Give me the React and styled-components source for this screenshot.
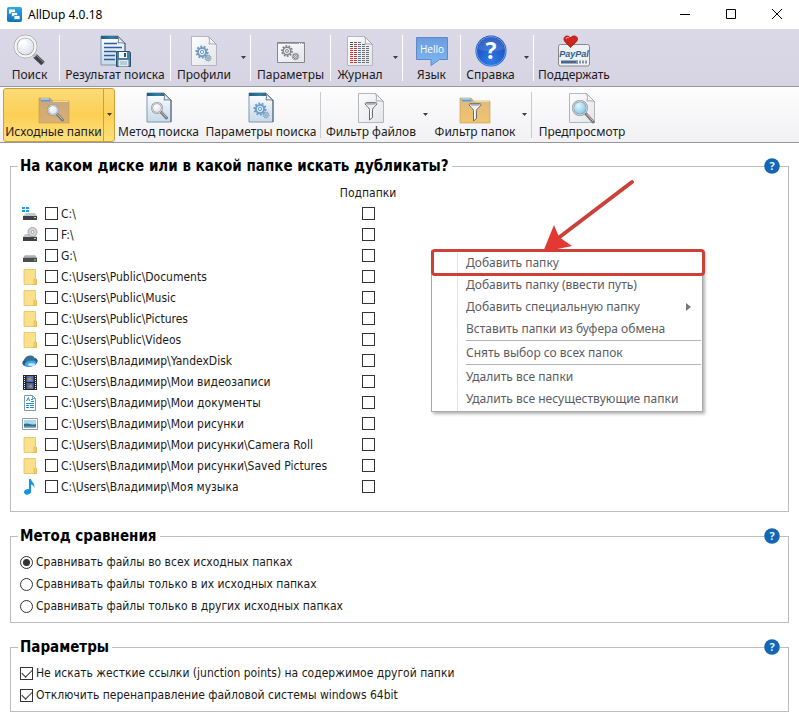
import React from 'react';
import styled, { createGlobalStyle } from 'styled-components';

const GlobalStyle = createGlobalStyle`
    * {
        box-sizing: border-box;
    }

    body {
        margin: 0;
        background-color: #fff;
        color: #1a1a1a;
        font-family: 'DejaVu Sans Condensed', 'DejaVu Sans', sans-serif;
        font-size: 12px;
    }

    button,
    input {
        font: inherit;
        color: inherit;
        margin: 0;
    }
`;

const uiFont = "'Noto Sans', 'Open Sans', sans-serif";

// Title bar
const TitleBar = styled.header`
    display: flex;
    align-items: center;
    height: 29px;
    padding: 0 16px 0 7px;
    gap: 6px;
    font-family: ${uiFont};
    font-size: 12px;
    color: #000;
`;

const AppTitle = styled.h1`
    flex: 1;
    margin: 0;
    font-size: 12px;
    font-weight: 400;
    line-height: 16px;
`;

const WindowButtons = styled.div`
    display: flex;
    gap: 34px;
`;

const WindowButton = styled.button`
    display: flex;
    width: 12px;
    height: 12px;
    padding: 0;
    border: 0;
    background: none;
`;

// Toolbars
const Toolbar = styled.nav`
    display: flex;
    align-items: center;
    height: ${(p) => (p.$main ? 58 : 56)}px;
    padding-left: ${(p) => (p.$main ? 0 : 3)}px;
    border-bottom: 1px solid #98979d;
    background: ${(p) =>
        p.$main
            ? 'linear-gradient(#dbd8e7, #d6d3e2)'
            : 'linear-gradient(#fdfdfe, #f1f1f3)'};
    font-family: ${uiFont};
`;

const Separator = styled.span`
    flex: none;
    width: 1px;
    height: 46px;
    background-color: ${(p) => (p.$light ? '#fff' : '#c9c9cf')};
`;

const ToolSplit = styled.div`
    flex: none;
    display: flex;
    height: 54px;
    border: 1px solid ${(p) => (p.$active ? '#c9a03c' : 'transparent')};
    border-radius: 3px;
    background: ${(p) =>
        p.$active ? 'linear-gradient(#fddb78, #fccf55 50%, #fee07c)' : 'none'};
`;

const ToolButton = styled.button`
    display: flex;
    flex-direction: column;
    align-items: center;
    width: ${(p) => p.$width}px;
    padding: 3px 0 0;
    border: 0;
    background: none;
    font-size: 12px;
    line-height: 16px;
    white-space: nowrap;
    color: #1d1b22;

    svg {
        flex: none;
        display: block;
        overflow: visible;
    }
`;

const DropButton = styled.button`
    display: flex;
    align-items: center;
    justify-content: center;
    width: ${(p) => p.$width}px;
    padding: 0;
    border: 0;
    border-left: 1px solid ${(p) => (p.$active ? '#c9a03c' : 'transparent')};
    background: none;
`;

// Groups
const Main = styled.main`
    display: flex;
    flex-direction: column;
    gap: 14px;
    padding: 13px 10px;
`;

const Group = styled.fieldset`
    position: relative;
    min-width: 0;
    margin: 0;
    padding: ${(p) => (p.$tall ? '6px 7px 14px' : '5px 7px')};
    border: 1px solid #bdbdbd;
`;

const GroupTitle = styled.legend`
    padding: 0 3px 0 2px;
    font-size: 15px;
    font-weight: 700;
    line-height: 20px;
    color: #000;
`;

const HelpButton = styled.button`
    position: absolute;
    top: -18px;
    right: 8px;
    display: flex;
    width: 16px;
    height: 16px;
    padding: 0;
    border: 0;
    border-radius: 50%;
    background: #fff;
`;

const FolderTable = styled.table`
    border-collapse: collapse;

    th {
        padding: 0;
        font-weight: 400;
        text-align: center;
    }

    td {
        height: 21px;
        padding: 0;
    }

    tr {
        height: 21px;
    }
`;

const IconCell = styled.td`
    width: 27px;
    padding-left: 4px !important;

    svg {
        display: block;
    }
`;

const PathCell = styled.td`
    width: 294px;
`;

const SubCell = styled.td`
    width: 58px;

    input {
        margin: 0 auto;
    }
`;

const Option = styled.label`
    display: flex;
    align-items: center;
    gap: 3px;
    height: ${(p) => (p.$compact ? 21 : 22)}px;
    padding-left: ${(p) => (p.$compact ? 0 : 2)}px;
    white-space: nowrap;
`;

const CheckBox = styled.input`
    appearance: none;
    flex: none;
    display: flex;
    align-items: center;
    justify-content: center;
    width: 13px;
    height: 13px;
    border: 1px solid #333;
    background-color: #fff;

    &:checked::before {
        content: '';
        width: 9px;
        height: 5px;
        margin-bottom: 3px;
        border: solid #333;
        border-width: 0 0 1px 1px;
        transform: rotate(-45deg);
    }
`;

const RadioButton = styled.input`
    appearance: none;
    flex: none;
    display: flex;
    align-items: center;
    justify-content: center;
    width: 13px;
    height: 13px;
    border: 1px solid #333;
    border-radius: 50%;
    background-color: #fff;

    &:checked::before {
        content: '';
        width: 7px;
        height: 7px;
        border-radius: 50%;
        background-color: #333;
    }
`;

// Context menu, floats over the folder group
const MenuLayer = styled.div`
    position: absolute;
    top: 74px;
    left: 420px;
    width: 274px;
    font-family: ${uiFont};
`;

const Menu = styled.div`
    display: flex;
    flex-direction: column;
    width: 272px;
    padding: 1px;
    border: 1px solid #a9a9a9;
    background: linear-gradient(
        to right,
        #fff 25px,
        #e2e2e2 25px,
        #e2e2e2 26px,
        #fff 26px
    );
    box-shadow: 2px 2px 3px rgba(0, 0, 0, 0.3);
`;

const MenuItem = styled.button`
    display: flex;
    align-items: center;
    justify-content: space-between;
    height: 22px;
    padding: 0 10px 0 33px;
    border: 0;
    background: none;
    font-size: 12px;
    line-height: 16px;
    white-space: nowrap;
    color: #5c5c62;
`;

const MenuLine = styled.hr`
    width: auto;
    height: 1px;
    margin: 0 0 1px 33px;
    border: 0;
    background-color: #b5b5b5;
`;

const Highlight = styled.div`
    position: absolute;
    top: -1px;
    left: 0;
    width: 274px;
    height: 27px;
    border: 3px solid #cb4139;
    border-radius: 4px;
    pointer-events: none;
`;

const Pointer = styled.svg`
    position: absolute;
    top: -72px;
    left: 108px;
    pointer-events: none;
`;

// Shared drawing parts
const Gradients = () => (
    <svg width="0" height="0" style={{ position: 'absolute' }} aria-hidden="true">
        <defs>
            <linearGradient id="page" x1="0" y1="0" x2="1" y2="1">
                <stop offset="0" stopColor="#fdfdfe" />
                <stop offset="1" stopColor="#e3e5ea" />
            </linearGradient>
            <linearGradient id="bluePage" x1="0" y1="0" x2="0" y2="1">
                <stop offset="0" stopColor="#fdfefe" />
                <stop offset="1" stopColor="#c7d9e8" />
            </linearGradient>
            <linearGradient id="teal" x1="0" y1="0" x2="1" y2="0">
                <stop offset="0" stopColor="#1c5c84" />
                <stop offset="0.6" stopColor="#2f7fa6" />
                <stop offset="1" stopColor="#4b5c6a" />
            </linearGradient>
            <linearGradient id="folder" x1="0" y1="0" x2="0" y2="1">
                <stop offset="0" stopColor="#ddba80" />
                <stop offset="1" stopColor="#f2c46c" />
            </linearGradient>
            <linearGradient id="folderOn" x1="0" y1="0" x2="0" y2="1">
                <stop offset="0" stopColor="#c8a77a" />
                <stop offset="1" stopColor="#d9b070" />
            </linearGradient>
            <linearGradient id="bubble" x1="0" y1="0" x2="0" y2="1">
                <stop offset="0" stopColor="#6c9ee0" />
                <stop offset="1" stopColor="#7db7f0" />
            </linearGradient>
            <radialGradient id="ball" cx="0.5" cy="0.8" r="0.8">
                <stop offset="0" stopColor="#2f7be8" />
                <stop offset="1" stopColor="#1546b4" />
            </radialGradient>
            <radialGradient id="glass" cx="0.4" cy="0.35" r="0.7">
                <stop offset="0" stopColor="#ffffff" />
                <stop offset="1" stopColor="#d3dde6" />
            </radialGradient>
            <radialGradient id="glassBlue" cx="0.4" cy="0.35" r="0.7">
                <stop offset="0" stopColor="#e2f8ff" />
                <stop offset="1" stopColor="#6fc0e4" />
            </radialGradient>
            <linearGradient id="disk" x1="0" y1="0" x2="0" y2="1">
                <stop offset="0" stopColor="#c9cbcd" />
                <stop offset="1" stopColor="#8f9194" />
            </linearGradient>
            <linearGradient id="logo" x1="0" y1="0" x2="0" y2="1">
                <stop offset="0" stopColor="#2aa9e6" />
                <stop offset="1" stopColor="#0e70b8" />
            </linearGradient>
        </defs>
    </svg>
);

const Icon = ({ children }) => (
    <svg width="32" height="32" viewBox="0 0 32 32" aria-hidden="true">
        {children}
    </svg>
);

const Page = () => (
    <>
        <path d="M3.5 1.5h17l8 8v21h-25z" fill="url(#page)" stroke="#b3b6bc" />
        <path d="M20.5 1.5c1.5 3 1 5 .5 7.5 3-.5 5.500 0 7.5.5z" fill="#f4f5f7" stroke="#a5a8ae" />
    </>
);

const BluePage = ({ x = 0 }) => (
    <g transform={`translate(${x} 0)`}>
        <path d="M4 1h17l7 7v22H4z" fill="url(#bluePage)" stroke="#7d98b1" />
        <path d="M4 1h17l1 3H4z" fill="url(#teal)" />
        <path d="M28 8v22" stroke="#46647e" />
        <path d="M20.500 1c1.500 3 1 5 .5 7 3-.5 5.500 0 7 .5z" fill="#e8edf2" stroke="#4e6476" strokeWidth="0.800" />
    </g>
);

const Gear = ({ x, y, r, color, width = 1.5 }) => (
    <g fill="none" stroke={color}>
        <circle
            cx={x}
            cy={y}
            r={r}
            strokeWidth={r * 0.4}
            pathLength="20"
            strokeDasharray="1.1 0.9"
        />
        <circle cx={x} cy={y} r={r * 0.75} strokeWidth={width} />
        <circle cx={x} cy={y} r={r * 0.3} strokeWidth="1" />
    </g>
);

const Lens = ({ x, y, r, fill = 'url(#glass)' }) => (
    <>
        <path
            d={`M${x + r * 0.8} ${y + r * 0.8}l${r * 1.1} ${r * 1.2}`}
            stroke="#74777b"
            strokeWidth="3"
            strokeLinecap="round"
        />
        <path
            d={`M${x + r * 0.9} ${y + r * 0.8}l${r} ${r * 1.1}`}
            stroke="#c6c8cb"
            strokeWidth="1"
        />
        <circle cx={x} cy={y} r={r} fill={fill} stroke="#85898e" strokeWidth="2" />
        <circle cx={x} cy={y} r={r} fill="none" stroke="#dfe1e3" strokeWidth="1" />
    </>
);

const FolderShape = ({ fill }) => (
    <>
        <path d="M1 6h11l3 3h16v22H1z" fill={`url(#${fill})`} stroke="#bd9a5d" strokeWidth="0.6" />
        <path d="M3 6.500h8l2 3H3z" fill="#5b9fd0" />
        <path d="M3 6.500h8v1H3z" fill="#d7edf8" />
        <path d="M15 9.500h15.500" stroke="#eed6a5" />
    </>
);

const Funnel = ({ y = 0 }) => (
    <g transform={`translate(0 ${y})`}>
        <path
            d="M10 10.500c0-1.500 12-1.500 12 0 0 2-4.500 4-4.500 6v8l-3 2.500v-10.500c0-2-4.500-4-4.500-6z"
            fill="#eceeef"
            stroke="#6a6d70"
        />
        <ellipse cx="16" cy="10.700" rx="5" ry="1" fill="#a9acaf" />
        <path d="M15.500 17v8" stroke="#fff" />
    </g>
);

const SearchIcon = () => (
    <Icon>
        <path d="M21 21l8 7.500" stroke="#3e4145" strokeWidth="5" />
        <path d="M22.500 20.500l8 7.500" stroke="#8c9095" strokeWidth="1" />
        <path d="M18.500 18.500l3 3" stroke="#b9bbbe" strokeWidth="3" />
        <circle cx="11.500" cy="11.500" r="10" fill="url(#glass)" stroke="#8d9093" strokeWidth="3.500" />
        <circle cx="11.500" cy="11.500" r="10" fill="none" stroke="#f3f3f1" strokeWidth="2.500" />
        <path d="M5.500 11a6 6 0 0 1 6-5.500" fill="none" stroke="#fff" strokeWidth="2" />
    </Icon>
);

const ResultIcon = () => (
    <Icon>
        <BluePage x={-2} />
        <path d="M5 8.500h13M5 12.500h18M5 16.500h12M5 20.500h11M5 24.500h11" stroke="#2f5d9c" strokeWidth="1.500" />
        <path d="M17.500 16.500h13l1 1v14h-14z" fill="#4f7f9c" stroke="#2c526b" />
        <path d="M20 17h8v6h-8z" fill="#f1f6f9" />
        <path d="M25 18h2v4h-2z" fill="#2c526b" />
        <path d="M19.500 25h10v6.500h-10z" fill="#dfeaf0" />
        <path d="M21 27h7M21 29h7" stroke="#93afbe" />
    </Icon>
);

const ProfilesIcon = () => (
    <Icon>
        <Page />
        <Gear x={14} y={17} r={5.5} color="#6f9cc4" width={2} />
        <Gear x={20} y={23} r={3} color="#7d9dbb" width={1} />
    </Icon>
);

const SettingsIcon = () => (
    <Icon>
        <path d="M2.500 7.500h27v20h-27z" fill="url(#page)" stroke="#85878b" />
        <path d="M3 8.500h26" stroke="#a2a4a8" />
        <path d="M24 8.500h4" stroke="#fff" strokeDasharray="1 1" />
        <Gear x={12} y={16} r={5} color="#85878a" />
        <Gear x={20.5} y={21.5} r={3.2} color="#85878a" width={1} />
    </Icon>
);

const JournalIcon = () => (
    <Icon>
        <Page />
        <path d="M7.500 7v5" stroke="#4c4f54" strokeWidth="3" strokeDasharray="1 1" />
        <path d="M7.500 13v15" stroke="#d03a32" strokeWidth="3" strokeDasharray="1 1" />
        <path d="M11.500 7v21" stroke="#a2433f" strokeWidth="3" strokeDasharray="1 1" />
        <path d="M15.500 7v21" stroke="#5f7396" strokeWidth="3" strokeDasharray="1 1" />
        <path d="M19.500 9v19M23.500 11v17" stroke="#6d7075" strokeWidth="3" strokeDasharray="1 1" />
    </Icon>
);

const LanguageIcon = () => (
    <Icon>
        <path d="M.5 2.500h31v22h-8l-8.500 6v-6H.5z" fill="url(#bubble)" stroke="#6089c9" />
        <text x="16" y="17.500" textAnchor="middle" fontFamily="Open Sans, sans-serif" fontSize="10" fill="#fff">
            Hello
        </text>
    </Icon>
);

const HelpIcon = () => (
    <Icon>
        <circle cx="16" cy="16" r="15.500" fill="url(#ball)" />
        <circle cx="16" cy="16" r="14.500" fill="none" stroke="#6f9fe6" />
        <path d="M3 14a13 12 0 0 1 26 0c-6 3-20 3-26 0z" fill="#fff" opacity="0.13" />
        <text x="16" y="24" textAnchor="middle" fontFamily="Open Sans, sans-serif" fontSize="23" fontWeight="700" fill="#fff">
            ?
        </text>
    </Icon>
);

const DonateIcon = () => (
    <Icon>
        <rect x="0.500" y="9.500" width="31" height="21.500" rx="2" fill="#eff1f3" stroke="#85888d" />
        <path d="M3 27h17" stroke="#49688c" strokeWidth="3" />
        <path d="M18 27h11" stroke="#8296ad" strokeWidth="3" strokeDasharray="2 1" />
        <text x="16" y="22" textAnchor="middle" fontFamily="Liberation Sans, sans-serif" fontSize="9" fontWeight="700" fontStyle="italic" fill="#2d5f8f">
            PayPal
        </text>
        <path d="M12.500 12.500c-3-3.500-7-6-6.500-9C6.500.5 10.500 0 12.500 3c2-3 6.500-2.500 7 .5s-4 5.500-7 9z" fill="#d2231e" stroke="#8f1512" strokeWidth="0.800" />
        <path d="M8 4c0-1.500 2-2 3-1" fill="none" stroke="#f28b82" strokeWidth="1.200" />
    </Icon>
);

const SourceIcon = () => (
    <Icon>
        <FolderShape fill="folderOn" />
        <Lens x={15} y={18} r={5} />
    </Icon>
);

const MethodIcon = () => (
    <Icon>
        <BluePage />
        <Lens x={14} y={16} r={5} />
    </Icon>
);

const SearchSettingsIcon = () => (
    <Icon>
        <BluePage />
        <Gear x={15} y={17} r={5.5} color="#6b9ecb" width={2} />
        <Gear x={21} y={23} r={3} color="#86a3bd" width={1} />
    </Icon>
);

const FileFilterIcon = () => (
    <Icon>
        <Page />
        <Funnel y={1} />
    </Icon>
);

const FolderFilterIcon = () => (
    <Icon>
        <FolderShape fill="folder" />
        <Funnel y={2} />
    </Icon>
);

const PreviewIcon = () => (
    <Icon>
        <Page />
        <Lens x={14} y={16} r={7} fill="url(#glassBlue)" />
    </Icon>
);

const SmallHelp = () => (
    <svg width="16" height="16" viewBox="0 0 16 16" aria-hidden="true">
        <circle cx="8" cy="8" r="7.800" fill="#1466b4" />
        <text x="8" y="12" textAnchor="middle" fontFamily="Open Sans, sans-serif" fontSize="11" fontWeight="700" fill="#d9f6ff">
            ?
        </text>
    </svg>
);

const DownArrow = () => (
    <svg width="5" height="3" viewBox="0 0 5 3" aria-hidden="true">
        <path d="M0 0h5L2.500 3z" fill="#3b3b40" />
    </svg>
);

// 16px icons of the folder list
const listIcons = {
    system: (
        <>
            <path d="M0 1h3v2H0zM4 1h3v2H4zM0 4h3v2H0zM4 4h3v2H4z" fill="#1b9fe0" />
            <path d="M4 7h9l2 3H1z" fill="#c5c8ca" />
            <path d="M1 10h14v4H1z" fill="#3e4246" />
            <path d="M12 11.500h2" stroke="#8ef09c" />
        </>
    ),
    cd: (
        <>
            <path d="M3 7h10l2 3H1z" fill="#c5c8ca" />
            <circle cx="10.500" cy="5" r="4.500" fill="#d5d7d9" stroke="#8d9093" strokeWidth="0.800" />
            <circle cx="10.500" cy="5" r="1.500" fill="#fff" stroke="#8d9093" strokeWidth="0.800" />
            <path d="M1 10h14v4H1z" fill="#3e4246" />
            <path d="M12 11.500h2" stroke="#8ef09c" />
        </>
    ),
    drive: (
        <>
            <path d="M3 7h10l2 3H1z" fill="url(#disk)" />
            <path d="M1 10h14v4H1z" fill="#4a4e52" />
            <path d="M12 12h2" stroke="#8ef09c" />
        </>
    ),
    folder: (
        <>
            <path d="M2 .5h11.500v9l1 1v5H2z" fill="#fbe08c" stroke="#e2bf5f" strokeWidth="0.800" />
            <path d="M12 15.500v-5l1.500-1 1 1v5z" fill="#f4cf66" stroke="#d9b24f" strokeWidth="0.600" />
        </>
    ),
    yandex: (
        <>
            <ellipse cx="8" cy="9" rx="7.800" ry="4.500" transform="rotate(-12 8 9)" fill="#2a5878" />
            <path d="M2 7c1-4 7-6 10-3l2 4-8 3z" fill="#376f92" />
            <ellipse cx="8.500" cy="10.800" rx="6" ry="3" transform="rotate(-10 8 10)" fill="#3fa9ee" />
            <ellipse cx="9.500" cy="11.500" rx="3.500" ry="1.600" fill="#bfe6ff" />
        </>
    ),
    video: (
        <>
            <path d="M1 1h14v15H1z" fill="#25272c" />
            <path d="M2.500 2v14M13.500 2v14" stroke="#eee" strokeDasharray="1 1" />
            <path d="M4.500 2h7v6h-7z" fill="#4a74c4" />
            <path d="M4.500 9h7v6h-7z" fill="#3f67b0" />
            <path d="M5 6l3-3 3 4zM6 13l3-3 2 4z" fill="#b98a4b" />
        </>
    ),
    document: (
        <>
            <path d="M2.500 .5h8l3 3v12h-11z" fill="#fbfdfe" stroke="#7f9aab" />
            <path d="M10.500 .5v3h3" fill="none" stroke="#7f9aab" />
            <path d="M4.500 6l2-3.500 1 3.500M9 4.500h2M9 6.500h3M4 8.500h8M4 10.500h3M8 10.500h4M4 12.500h3M8 12.500h4" fill="none" stroke="#2690bb" />
        </>
    ),
    picture: (
        <>
            <path d="M.5 2.500h15v11H.5z" fill="#fff" stroke="#8f9ba4" />
            <path d="M2 4h12v8H2z" fill="#a8d7ee" />
            <path d="M2 8c4-2 8 2 12 0v4H2z" fill="#356f86" />
            <path d="M2 10.500h12V12H2z" fill="#7fb3cc" />
        </>
    ),
    music: (
        <>
            <ellipse cx="5.500" cy="13" rx="3.500" ry="2.800" transform="rotate(-15 5 13)" fill="#1597dd" />
            <path d="M7 0h2c.3 3 4.300 4 3.300 9-.2-2-1.500-3-3.300-3.500v8H7z" fill="#1597dd" />
        </>
    ),
};

const mainTools = [
    { label: 'Поиск', icon: <SearchIcon />, width: 57, line: true },
    { label: 'Результат поиска', icon: <ResultIcon />, width: 108, line: true },
    { label: 'Профили', icon: <ProfilesIcon />, width: 64, drop: 13, line: true },
    { label: 'Параметры', icon: <SettingsIcon />, width: 77, line: true },
    { label: 'Журнал', icon: <JournalIcon />, width: 56, drop: 13, line: true },
    { label: 'Язык', icon: <LanguageIcon />, width: 55, line: true },
    { label: 'Справка', icon: <HelpIcon />, width: 57, drop: 13, line: true },
    { label: 'Поддержать', icon: <DonateIcon />, width: 78 },
];

const searchTools = [
    { label: 'Исходные папки', icon: <SourceIcon />, width: 99, drop: 11, active: true },
    { label: 'Метод поиска', icon: <MethodIcon />, width: 85 },
    { label: 'Параметры поиска', icon: <SearchSettingsIcon />, width: 116, line: true },
    { label: 'Фильтр файлов', icon: <FileFilterIcon />, width: 98, drop: 10 },
    { label: 'Фильтр папок', icon: <FolderFilterIcon />, width: 86, drop: 12, line: true },
    { label: 'Предпросмотр', icon: <PreviewIcon />, width: 98 },
];

const folders = [
    ['system', 'C:\\'],
    ['cd', 'F:\\'],
    ['drive', 'G:\\'],
    ['folder', 'C:\\Users\\Public\\Documents'],
    ['folder', 'C:\\Users\\Public\\Music'],
    ['folder', 'C:\\Users\\Public\\Pictures'],
    ['folder', 'C:\\Users\\Public\\Videos'],
    ['yandex', 'C:\\Users\\Владимир\\YandexDisk'],
    ['video', 'C:\\Users\\Владимир\\Мои видеозаписи'],
    ['document', 'C:\\Users\\Владимир\\Мои документы'],
    ['picture', 'C:\\Users\\Владимир\\Мои рисунки'],
    ['folder', 'C:\\Users\\Владимир\\Мои рисунки\\Camera Roll'],
    ['folder', 'C:\\Users\\Владимир\\Мои рисунки\\Saved Pictures'],
    ['music', 'C:\\Users\\Владимир\\Моя музыка'],
];

const methods = [
    'Сравнивать файлы во всех исходных папках',
    'Сравнивать файлы только в их исходных папках',
    'Сравнивать файлы только в других исходных папках',
];

const options = [
    'Не искать жесткие ссылки (junction points) на содержимое другой папки',
    'Отключить перенаправление файловой системы windows 64bit',
];

function Tools({ items, main }) {
    return (
        <Toolbar $main={main}>
            {items.map((tool) => (
                <React.Fragment key={tool.label}>
                    <ToolSplit $active={tool.active}>
                        <ToolButton type="button" $width={tool.width}>
                            {tool.icon}
                            {tool.label}
                        </ToolButton>
                        {tool.drop && (
                            <DropButton
                                type="button"
                                aria-label={tool.label}
                                $width={tool.drop}
                                $active={tool.active}
                            >
                                <DownArrow />
                            </DropButton>
                        )}
                    </ToolSplit>
                    {tool.line && <Separator $light={main} />}
                </React.Fragment>
            ))}
        </Toolbar>
    );
}

function ContextMenu() {
    return (
        <MenuLayer>
            <Menu>
                <MenuItem type="button">Добавить папку</MenuItem>
                <MenuItem type="button">Добавить папку (ввести путь)</MenuItem>
                <MenuItem type="button">
                    Добавить специальную папку
                    <svg width="5" height="8" viewBox="0 0 5 8" aria-hidden="true">
                        <path d="M0 0v8l5-4z" fill="#77777c" />
                    </svg>
                </MenuItem>
                <MenuItem type="button">Вставить папки из буфера обмена</MenuItem>
                <MenuLine />
                <MenuItem type="button">Снять выбор со всех папок</MenuItem>
                <MenuLine />
                <MenuItem type="button">Удалить все папки</MenuItem>
                <MenuItem type="button">Удалить все несуществующие папки</MenuItem>
            </Menu>
            <Highlight />
            <Pointer width="100" height="76" viewBox="0 0 100 76" aria-hidden="true">
                <path d="M93 4L18 61" stroke="#cb4139" strokeWidth="4" strokeLinecap="round" />
                <path d="M4 74l11-27 5 12 13 9z" fill="#e23a33" />
            </Pointer>
        </MenuLayer>
    );
}

function Help() {
    return (
        <HelpButton type="button" aria-label="Справка">
            <SmallHelp />
        </HelpButton>
    );
}

function App() {
    return (
        <>
            <GlobalStyle />
            <Gradients />
            <TitleBar>
                <svg width="15" height="15" viewBox="0 0 15 15" aria-hidden="true">
                    <rect width="15" height="15" rx="2" fill="url(#logo)" />
                    <path d="M2 2.500h6v4H2z" fill="#fff" />
                    <path d="M4.500 5.500h6v4h-6z" fill="#fff" stroke="#1b8acb" strokeWidth="0.800" />
                    <path d="M7 8.500h6v4H7z" fill="#fff" stroke="#1b8acb" strokeWidth="0.800" />
                </svg>
                <AppTitle>AllDup 4.0.18</AppTitle>
                <WindowButtons>
                    <WindowButton type="button" aria-label="Свернуть">
                        <svg width="12" height="12" viewBox="0 0 12 12">
                            <path d="M1 5.500h10" stroke="#000" />
                        </svg>
                    </WindowButton>
                    <WindowButton type="button" aria-label="Развернуть">
                        <svg width="12" height="12" viewBox="0 0 12 12">
                            <path d="M1.500 .5h9v9h-9z" fill="none" stroke="#000" />
                        </svg>
                    </WindowButton>
                    <WindowButton type="button" aria-label="Закрыть">
                        <svg width="12" height="12" viewBox="0 0 12 12">
                            <path d="M1 0l10 10M11 0L1 10" stroke="#000" />
                        </svg>
                    </WindowButton>
                </WindowButtons>
            </TitleBar>
            <Tools items={mainTools} main />
            <Tools items={searchTools} />
            <Main>
                <Group $tall>
                    <GroupTitle>На каком диске или в какой папке искать дубликаты?</GroupTitle>
                    <Help />
                    <FolderTable>
                        <thead>
                            <tr>
                                <td />
                                <td />
                                <th scope="col">Подпапки</th>
                            </tr>
                        </thead>
                        <tbody>
                            {folders.map(([icon, path]) => (
                                <tr key={path}>
                                    <IconCell>
                                        <svg width="16" height="16" viewBox="0 0 16 16" aria-hidden="true">
                                            {listIcons[icon]}
                                        </svg>
                                    </IconCell>
                                    <PathCell>
                                        <Option $compact>
                                            <CheckBox type="checkbox" />
                                            {path}
                                        </Option>
                                    </PathCell>
                                    <SubCell>
                                        <CheckBox type="checkbox" aria-label={`Подпапки ${path}`} />
                                    </SubCell>
                                </tr>
                            ))}
                        </tbody>
                    </FolderTable>
                    <ContextMenu />
                </Group>
                <Group>
                    <GroupTitle>Метод сравнения</GroupTitle>
                    <Help />
                    {methods.map((text, i) => (
                        <Option key={text}>
                            <RadioButton type="radio" name="method" defaultChecked={i === 0} />
                            {text}
                        </Option>
                    ))}
                </Group>
                <Group>
                    <GroupTitle>Параметры</GroupTitle>
                    <Help />
                    {options.map((text) => (
                        <Option key={text}>
                            <CheckBox type="checkbox" defaultChecked />
                            {text}
                        </Option>
                    ))}
                </Group>
            </Main>
        </>
    );
}

export default App;
